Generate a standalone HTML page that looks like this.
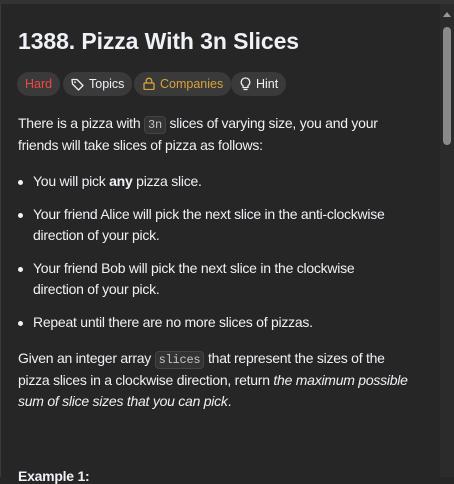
<!DOCTYPE html>
<html><head><style>
*{margin:0;padding:0;box-sizing:border-box}
body{width:454px;height:477px;background:#262626;overflow:hidden;font-family:"Liberation Sans",sans-serif;color:#eff1f6;position:relative}
.top{position:absolute;left:0;top:0;width:454px;height:4px;background:#333}
.lb{position:absolute;left:0;top:4px;width:1px;height:473px;background:#3a3a3a}
.sb{position:absolute;left:440px;top:4px;width:14px;height:473px;background:#2b2b2b}
.thumb{position:absolute;left:443px;top:27px;width:8px;height:118px;border-radius:4px;background:#8a8a8a}
.arr{position:absolute;left:443px;top:12px;width:0;height:0;border-left:4px solid transparent;border-right:4px solid transparent;border-bottom:5px solid #9a9a9a}
.l{position:absolute;white-space:nowrap;font-size:14px;letter-spacing:-0.25px}
h1{position:absolute;left:18px;top:28px;font-size:23px;font-weight:bold;white-space:nowrap;letter-spacing:-0.1px}
.tag{position:absolute;top:72px;height:24px;border-radius:12px;background:#3a3a3a;font-size:12.5px;line-height:24px;padding:0 8px;white-space:nowrap}
code{font-family:"Liberation Mono",monospace;font-size:12px;background:#333;border:1px solid #444;border-radius:4px;padding:1px 3px;color:#c5c5c5}
.d{position:absolute;left:18px;width:5px;height:5px;border-radius:50%;background:#eff1f6}
</style></head><body>
<div class="top"></div><div class="lb"></div>
<div class="sb"></div><div class="arr"></div><div class="thumb"></div>
<h1>1388. Pizza With 3n Slices</h1>
<div class="tag" style="left:17px;color:#ef4743">Hard</div>
<div class="tag" style="left:63px;padding-left:26px">
<svg style="position:absolute;left:8px;top:6px" width="13" height="13" viewBox="0 0 13 13"><path d="M1 1.5h5l6 6-4.5 4.5-6-6z" fill="none" stroke="#eee" stroke-width="1.3" stroke-linejoin="round"/><circle cx="4" cy="4.2" r="0.9" fill="#eee"/></svg>Topics</div>
<div class="tag" style="left:134px;padding-left:26px;color:#d8a33a">
<svg style="position:absolute;left:9px;top:5px" width="12" height="13" viewBox="0 0 12 13"><rect x="1" y="6" width="10" height="6.5" rx="1" fill="none" stroke="#d8a33a" stroke-width="1.3"/><path d="M3.2 6V4a2.8 2.8 0 0 1 5.6 0v2" fill="none" stroke="#d8a33a" stroke-width="1.3"/></svg>Companies</div>
<div class="tag" style="left:231px;padding-left:25px">
<svg style="position:absolute;left:9px;top:5px" width="11" height="14" viewBox="0 0 11 14"><path d="M5.5 1a4.2 4.2 0 0 0-2.5 7.6V10.5h5V8.6A4.2 4.2 0 0 0 5.5 1z M3.5 12.5h4" fill="none" stroke="#eee" stroke-width="1.3"/></svg>Hint</div>

<div class="l" style="left:18px;top:115px">There is a pizza with <code>3n</code> slices of varying size, you and your</div>
<div class="l" style="left:18px;top:137px">friends will take slices of pizza as follows:</div>

<div class="d" style="top:180px"></div><div class="l" style="left:33px;top:173px">You will pick <b>any</b> pizza slice.</div>
<div class="d" style="top:213px"></div><div class="l" style="left:33px;top:206px">Your friend Alice will pick the next slice in the anti-clockwise</div>
<div class="l" style="left:33px;top:227px">direction of your pick.</div>
<div class="d" style="top:267px"></div><div class="l" style="left:33px;top:260px">Your friend Bob will pick the next slice in the clockwise</div>
<div class="l" style="left:33px;top:281px">direction of your pick.</div>
<div class="d" style="top:321px"></div><div class="l" style="left:33px;top:314px">Repeat until there are no more slices of pizzas.</div>

<div class="l" style="left:18px;top:350px">Given an integer array <code>slices</code> that represent the sizes of the</div>
<div class="l" style="left:18px;top:372px">pizza slices in a clockwise direction, return <i>the maximum possible</i></div>
<div class="l" style="left:18px;top:393px"><i>sum of slice sizes that you can pick</i>.</div>
<div class="l" style="left:18px;top:468px;font-weight:bold">Example 1:</div>
</body></html>
